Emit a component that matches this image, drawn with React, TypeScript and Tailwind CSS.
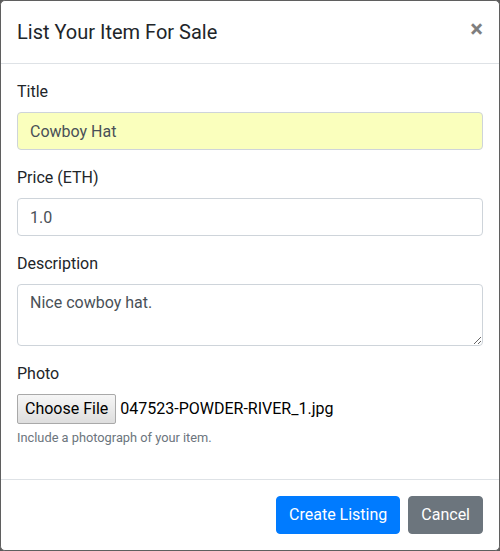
import { useState } from "react";

const inputCls =
  "block w-full h-[38px] px-3 py-1.5 text-base leading-6 text-[#495057] border border-[#ced4da] rounded-[0.25rem] outline-none";

const App = () => {
  const [title, setTitle] = useState("Cowboy Hat");
  const [price, setPrice] = useState("1.0");
  const [desc, setDesc] = useState("Nice cowboy hat.");

  return (
    <div className="w-[500px] h-[551px] bg-[#5a5a5a] font-['Roboto',sans-serif] text-[#212529]">
      <div className="flex flex-col w-full h-full bg-white border border-[#5f5f5f] rounded-[0.3rem]">
        {/* header */}
        <div className="flex items-start justify-between p-4 border-b border-[#dee2e6]">
          <h5 className="text-xl leading-[30px] font-normal">List Your Item For Sale</h5>
          <button
            type="button"
            className="-m-4 ml-auto p-4 text-2xl leading-none font-bold text-black opacity-50 [text-shadow:0_1px_0_#fff]"
          >
            ×
          </button>
        </div>

        {/* body */}
        <div className="p-4 flex-1">
          <div className="mb-4">
            <label className="block mb-2 leading-6">Title</label>
            <input
              className={`${inputCls} bg-[#faffbd]`}
              value={title}
              onChange={(e) => setTitle(e.target.value)}
            />
          </div>
          <div className="mb-4">
            <label className="block mb-2 leading-6">Price (ETH)</label>
            <input
              className={`${inputCls} bg-white`}
              value={price}
              onChange={(e) => setPrice(e.target.value)}
            />
          </div>
          <div className="mb-4">
            <label className="block mb-2 leading-6">Description</label>
            <textarea
              rows={2}
              className="block w-full h-[62px] px-3 py-1.5 text-base leading-6 text-[#495057] border border-[#ced4da] rounded-[0.25rem] outline-none"
              value={desc}
              onChange={(e) => setDesc(e.target.value)}
            />
          </div>
          <div className="mb-4">
            <label className="block mb-2 leading-6">Photo</label>
            <div className="flex items-center h-[30px]">
              <span className="flex items-center h-[30px] px-[7px] text-base text-black bg-gradient-to-b from-[#f6f6f6] to-[#dedede] border border-[#a9a9a9] rounded-[2px]">
                Choose File
              </span>
              <span className="ml-[4px] text-base text-black">047523-POWDER-RIVER_1.jpg</span>
            </div>
            <small className="block mt-1 text-[12.8px] leading-[19.2px] text-[#6c757d]">
              Include a photograph of your item.
            </small>
          </div>
        </div>

        {/* footer */}
        <div className="flex items-center justify-end p-3 border-t border-[#dee2e6]">
          <button className="m-1 px-3 py-1.5 text-base leading-6 text-white bg-[#007bff] border border-[#007bff] rounded-[0.25rem]">
            Create Listing
          </button>
          <button className="m-1 px-3 py-1.5 text-base leading-6 text-white bg-[#6c757d] border border-[#6c757d] rounded-[0.25rem]">
            Cancel
          </button>
        </div>
      </div>
    </div>
  );
};

export default App;
